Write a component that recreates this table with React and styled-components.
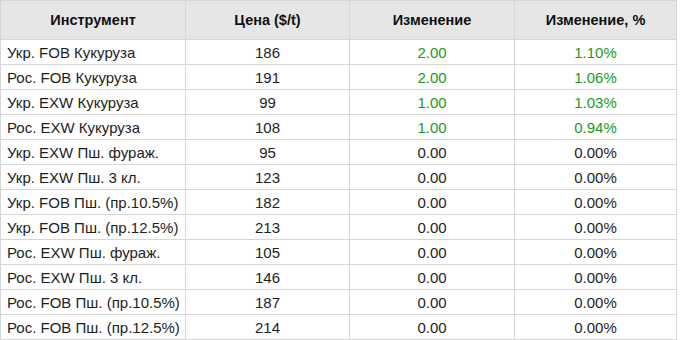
import React from "react";
import styled, { createGlobalStyle } from "styled-components";

const GlobalStyle = createGlobalStyle`
  body {
    margin: 0;
    background: #fff;
    font-family: "Liberation Sans", Arial, sans-serif;
  }
`;

const rows = [
  ["Укр. FOB Кукуруза", "186", "2.00", "1.10%"],
  ["Рос. FOB Кукуруза", "191", "2.00", "1.06%"],
  ["Укр. EXW Кукуруза", "99", "1.00", "1.03%"],
  ["Рос. EXW Кукуруза", "108", "1.00", "0.94%"],
  ["Укр. EXW Пш. фураж.", "95", "0.00", "0.00%"],
  ["Укр. EXW Пш. 3 кл.", "123", "0.00", "0.00%"],
  ["Укр. FOB Пш. (пр.10.5%)", "182", "0.00", "0.00%"],
  ["Укр. FOB Пш. (пр.12.5%)", "213", "0.00", "0.00%"],
  ["Рос. EXW Пш. фураж.", "105", "0.00", "0.00%"],
  ["Рос. EXW Пш. 3 кл.", "146", "0.00", "0.00%"],
  ["Рос. FOB Пш. (пр.10.5%)", "187", "0.00", "0.00%"],
  ["Рос. FOB Пш. (пр.12.5%)", "214", "0.00", "0.00%"],
];

const App = () => {
  return (
    <>
      <GlobalStyle />
      <PriceTable>
        <colgroup>
          <col style={{ width: 185 }} />
          <col style={{ width: 164 }} />
          <col style={{ width: 165 }} />
          <col style={{ width: 162 }} />
        </colgroup>
        <thead>
          <tr>
            <HeadCell>Инструмент</HeadCell>
            <HeadCell>Цена ($/t)</HeadCell>
            <HeadCell>Изменение</HeadCell>
            <HeadCell>Изменение, %</HeadCell>
          </tr>
        </thead>
        <tbody>
          {rows.map(([name, price, change, pct]) => {
            const up = parseFloat(change) > 0;
            return (
              <tr key={name}>
                <Cell $align="left">{name}</Cell>
                <Cell>{price}</Cell>
                <Cell $up={up}>{change}</Cell>
                <Cell $up={up}>{pct}</Cell>
              </tr>
            );
          })}
        </tbody>
      </PriceTable>
    </>
  );
};

//Styled Components

const PriceTable = styled.table`
  width: 677px;
  table-layout: fixed;
  border-collapse: collapse;
  color: #1e1e1e;
`;

const HeadCell = styled.th`
  height: 38px;
  padding: 0;
  border: 1px solid #d6d6d6;
  background: #e6e6e6;
  font-size: 14.5px;
  font-weight: bold;
  color: #111;
  text-align: center;
  white-space: nowrap;
`;

const Cell = styled.td`
  height: 24px;
  padding: 0 0 0 ${(p) => (p.$align === "left" ? "6px" : "0")};
  border: 1px solid #d6d6d6;
  font-size: 15px;
  text-align: ${(p) => p.$align || "center"};
  color: ${(p) => (p.$up ? "#229a22" : "#1e1e1e")};
  white-space: nowrap;
`;

export default App;
